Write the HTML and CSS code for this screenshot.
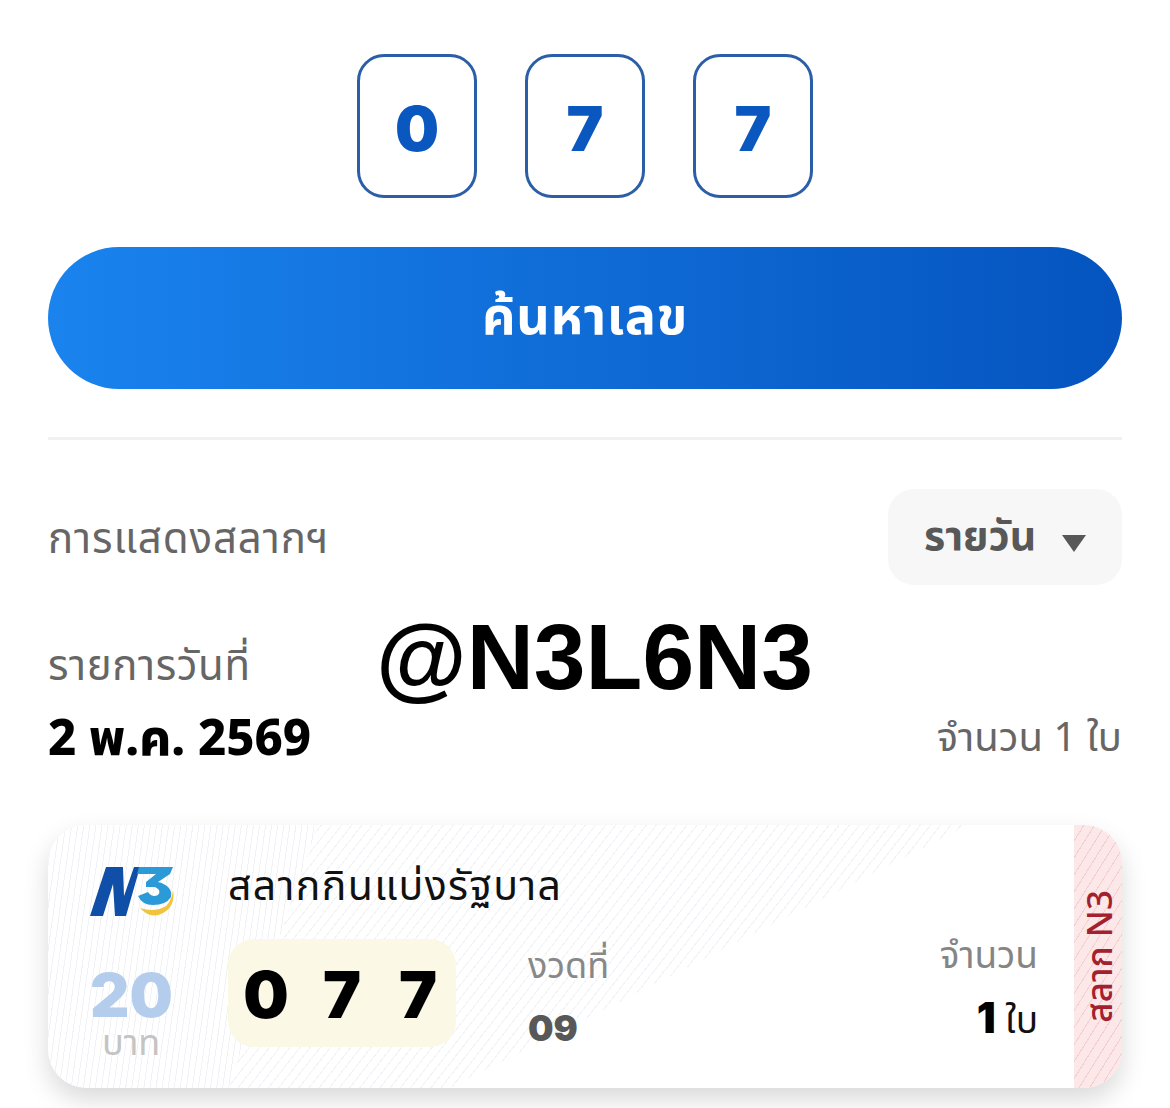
FILE: index.html
```html
<!DOCTYPE html>
<html lang="th">
<head>
<meta charset="utf-8">
<title>ค้นหาเลข</title>
<link rel="stylesheet" href="styles.css">
</head>
<body>
<main class="page">
  <div class="digits">
    <div class="digit">0</div>
    <div class="digit">7</div>
    <div class="digit">7</div>
  </div>
  <button class="search">ค้นหาเลข</button>
  <hr class="divider">
  <div class="display-row">
    <span class="muted-label">การแสดงสลากฯ</span>
    <div class="select"><span>รายวัน</span><i class="caret"></i></div>
  </div>
  <div class="date-block">
    <div class="muted-label date-label">รายการวันที่</div>
    <div class="date-row">
      <strong class="date">2 พ.ค. 2569</strong>
      <span class="count">จำนวน 1 ใบ</span>
    </div>
    <div class="watermark">@N3L6N3</div>
  </div>
  <article class="ticket">
    <div class="ticket-body">
      <div class="stripes stripes-left"></div>
      <div class="stripes stripes-right"></div>
      <div class="top-row">
        <svg class="logo" viewBox="0 0 84 51" preserveAspectRatio="none" aria-hidden="true">
          <path fill="#0f4fa8" d="M0 50 L16 1 L33 1 L34 30 L44 1 L50 1 L36 50 L25 50 L23 18 L13 50 Z"/>
          <path fill="#2b9ad6" d="M49 1 L83 1 L80 8 L68 16 Q83 20 81 31 Q76 39 63 39 Q52 39 48 30 L58 26 Q62 32 68 29 Q72 24 65 21 L56 21 L56 16 L66 8 L47 8 Z"/>
          <path fill="#f0c43c" d="M83 24 Q86 41 71 48 Q60 53 50 42 Q65 47 76 40 Q82 34 83 24 Z"/>
        </svg>
        <div class="ticket-title">สลากกินแบ่งรัฐบาล</div>
      </div>
      <div class="bottom-row">
        <div class="price"><b>20</b><span>บาท</span></div>
        <div class="number"><span>0</span><span>7</span><span>7</span></div>
        <div class="period"><span>งวดที่</span><b>09</b></div>
        <div class="qty"><span>จำนวน</span><div class="qty-val"><b>1</b> ใบ</div></div>
      </div>
    </div>
    <div class="side"><span>สลาก N3</span></div>
  </article>
</main>
</body>
</html>
```
FILE: styles.css
```css
* { box-sizing: border-box; }
html, body { margin: 0; height: 100%; }
body {
  background: #fff;
  font-family: "Noto Sans", "Noto Sans Thai", "Inter", "Liberation Sans", sans-serif;
  overflow: hidden;
}
.page { padding: 54px 48px 0; }
.digits { display: flex; justify-content: center; gap: 48px; }
.digit {
  width: 120px; height: 144px; padding-top: 6px;
  border: 3px solid #2a5ea6; border-radius: 27px;
  display: flex; align-items: center; justify-content: center;
  color: #0b57c0; font: 900 62px/1 "Inter", sans-serif;
}
.search {
  display: block; width: 100%; height: 142px; margin-top: 49px; padding: 0 0 8px;
  border: 0; border-radius: 71px;
  background: linear-gradient(90deg, #1a83ee 0%, #0554bf 100%);
  color: #fff; font: 700 52px/1 "Noto Sans", "Noto Sans Thai", sans-serif;
  letter-spacing: .6px;
}
.divider { border: 0; height: 3px; margin: 48px 0 0; background: #f0f1f3; }
.display-row { display: flex; justify-content: space-between; align-items: center; margin-top: 49px; }
.muted-label { color: #666; font-size: 42px; line-height: 1; letter-spacing: .9px; }
.select {
  width: 234px; height: 96px; border-radius: 26px; background: #f7f7f7;
  display: flex; align-items: center; gap: 26px; padding-left: 36px;
  color: #585858; font-size: 41px; font-weight: 700;
}
.caret {
  width: 0; height: 0; margin-top: 12px;
  border-left: 12px solid transparent; border-right: 12px solid transparent;
  border-top: 17px solid #585858;
}
.date-block { position: relative; margin-top: 59px; height: 181px; }
.date-label { line-height: 40px; letter-spacing: .6px; }
.date-row { display: flex; justify-content: space-between; align-items: center; margin-top: 22px; }
.date { color: #000; font-size: 49px; font-weight: 800; line-height: 60px; }
.count { color: #666; font-size: 40px; line-height: 60px; }
.watermark {
  position: absolute; left: 328px; top: -40px;
  font: 700 93px/1.15 "Liberation Sans", sans-serif; color: #000;
}
.ticket {
  display: flex; height: 263px; border-radius: 38px; overflow: hidden;
  background: #fff;
  box-shadow: 0 12px 26px rgba(0,0,0,.15);
}
.ticket-body { position: relative; flex: 1; min-width: 0; padding: 32px 36px 0 42px; }
.stripes { position: absolute; inset: 0; }
.stripes-left {
  background: repeating-linear-gradient(98deg, transparent 0 5px, #f1f2f5 5px 6px);
  clip-path: polygon(0 0, 270px 0, 180px 264px, 0 264px);
}
.stripes-right {
  background: repeating-linear-gradient(128deg, transparent 0 7px, #f1f2f5 7px 8px);
  clip-path: polygon(270px 0, 920px 0, 400px 264px, 180px 264px);
}
.top-row, .bottom-row { position: relative; display: flex; }
.top-row { align-items: center; height: 54px; }
.logo { width: 84px; height: 51px; flex: none; margin-top: 15px; }
.ticket-title { margin-left: 54px; font-size: 41px; color: #111; line-height: 1; letter-spacing: 1.4px; }
.bottom-row { margin-top: 28px; }
.price { width: 138px; display: flex; flex-direction: column; align-items: flex-start; }
.price b { color: #b5cdec; font: 900 61px/52px "Inter", sans-serif; margin-top: 30px; }
.price span { color: #c4c4c4; font-size: 36px; line-height: 36px; margin: 3px 0 0 12px; }
.number {
  width: 228px; height: 108px; padding-top: 4px; border-radius: 26px; background: #fbf9e6;
  display: flex; justify-content: center; align-items: center;
  font: 900 64px/1 "Inter", sans-serif; color: #000;
}
.number span { width: 76px; text-align: center; }
.period { margin-left: 72px; display: flex; flex-direction: column; }
.period span { color: #888; font-size: 36px; line-height: 1; margin-top: 8px; }
.period b { color: #585858; font: 900 36px/1 "Inter", sans-serif; margin-top: 27px; }
.qty { margin-left: auto; display: flex; flex-direction: column; align-items: flex-end; margin-top: -4px; }
.qty span { color: #858585; font-size: 37px; line-height: 1; }
.qty-val { margin-top: 25px; font-size: 37px; line-height: 1; color: #111; }
.qty-val b { font: 900 42px/1 "Inter", sans-serif; color: #000; }
.side {
  width: 48px; flex: none; display: flex; align-items: center; justify-content: center;
  background:
    repeating-linear-gradient(122deg, transparent 0 8px, #f5cfcf 8px 9px),
    #fce8e8;
}
.side span {
  writing-mode: vertical-rl; transform: rotate(180deg);
  color: #a3212e; font-size: 35px; font-weight: 500; line-height: 1; white-space: nowrap;
}
```
